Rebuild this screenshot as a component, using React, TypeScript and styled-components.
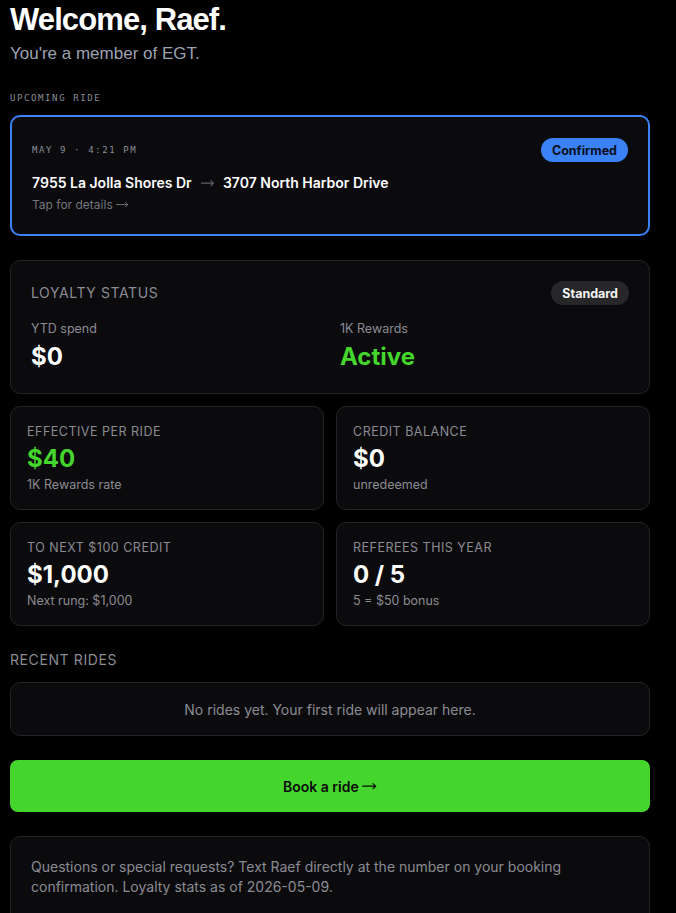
import React from "react";
import styled, { createGlobalStyle } from "styled-components";

const Global = createGlobalStyle`
  html, body { margin: 0; padding: 0; background: #000; }
  body { font-family: Inter, "Noto Sans", sans-serif; color: #fff; }
  * { box-sizing: border-box; }
`;

const Page = styled.div`
  padding: 0 26px 0 10px;
  display: flex;
  flex-direction: column;
`;

const Title = styled.h1`
  margin: 0;
  padding-top: 1px;
  font-family: "Liberation Sans", Arial, sans-serif;
  font-weight: 700;
  font-size: 31px;
  letter-spacing: -0.9px;
  line-height: 38px;
  color: #fff;
`;

const Subtitle = styled.p`
  margin: 5px 0 0;
  font-family: "Liberation Sans", Arial, sans-serif;
  font-size: 17px;
  line-height: 20px;
  color: #9ca3b3;
`;

const MonoLabel = styled.div`
  font-family: "DejaVu Sans Mono", "Liberation Mono", monospace;
  font-size: 9px;
  letter-spacing: 1.6px;
  color: #8a8f98;
  text-transform: uppercase;
`;

const SectionMono = styled(MonoLabel)`
  margin-top: 27px;
  line-height: 14px;
`;

const RideCard = styled.div`
  margin-top: 10px;
  border: 2px solid #3b82f6;
  border-radius: 10px;
  background: #0b0b0d;
  padding: 21px 20px 20px 20px;
  display: flex;
  flex-direction: column;
`;

const RideTop = styled.div`
  display: flex;
  justify-content: space-between;
  align-items: center;
`;

const Pill = styled.span<{ $tone: "blue" | "gray" }>`
  display: inline-flex;
  align-items: center;
  height: 24px;
  padding: 0 11px;
  border-radius: 12px;
  font-size: 12.5px;
  font-weight: 700;
  background: ${(p) => (p.$tone === "blue" ? "#3b82f6" : "#27272a")};
  color: ${(p) => (p.$tone === "blue" ? "#0a0f1e" : "#f4f4f5")};
`;

const Route = styled.div`
  margin-top: 10px;
  font-size: 14px;
  font-weight: 600;
  line-height: 22px;
  color: #fff;
  display: flex;
  align-items: center;
  gap: 9px;
`;

const ArrowSvg = styled.svg<{ $muted?: boolean }>`
  width: ${(p) => (p.$muted ? "0.95em" : "1.05em")};
  height: 0.6em;
  vertical-align: 0.05em;
  color: ${(p) => (p.$muted ? "#62626a" : "currentColor")};
  flex: none;
`;

function Arrow({ muted }: { muted?: boolean }) {
  return (
    <ArrowSvg $muted={muted} viewBox="0 0 15 8" fill="none" preserveAspectRatio="none">
      <path
        d="M0.5 4H14M11.2 1.6L14 4L11.2 6.4"
        stroke="currentColor"
        strokeWidth="1.1"
        strokeLinecap="round"
        strokeLinejoin="round"
      />
    </ArrowSvg>
  );
}

const Hint = styled.div`
  margin-top: 2px;
  font-size: 12px;
  line-height: 18px;
  color: #75757d;
`;

const Card = styled.div`
  border: 1px solid #232326;
  border-radius: 10px;
  background: #0b0b0d;
`;

const LoyaltyCard = styled(Card)`
  margin-top: 24px;
  padding: 20px 20px 21px;
`;

const LoyaltyHead = styled.div`
  display: flex;
  justify-content: space-between;
  align-items: center;
`;

const SectionLabel = styled.div`
  font-size: 14px;
  letter-spacing: 0.6px;
  text-transform: uppercase;
  color: #8b8b93;
  line-height: 20px;
`;

const TwoCol = styled.div`
  margin-top: 15px;
  display: grid;
  grid-template-columns: 1fr 1fr;
  column-gap: 20px;
`;

const SmallLabel = styled.div`
  font-size: 12.5px;
  line-height: 18px;
  color: #8b8b93;
`;

const BigValue = styled.div<{ $green?: boolean }>`
  margin-top: 4px;
  font-size: 24px;
  font-weight: 700;
  line-height: 30px;
  color: ${(p) => (p.$green ? "#44d62c" : "#fff")};
`;

const Grid = styled.div`
  margin-top: 12px;
  display: grid;
  grid-template-columns: 1fr 1fr;
  gap: 12px;
`;

const StatCard = styled(Card)`
  padding: 17px 16px 16px;
  height: 104px;
`;

const StatLabel = styled.div`
  font-size: 12.5px;
  letter-spacing: 0.5px;
  text-transform: uppercase;
  color: #8b8b93;
  line-height: 16px;
`;

const StatValue = styled(BigValue)`
  margin-top: 4px;
`;

const StatSub = styled.div`
  margin-top: 2px;
  font-size: 12.5px;
  line-height: 18px;
  color: #8b8b93;
`;

const RecentLabel = styled(SectionLabel)`
  margin-top: 24px;
`;

const EmptyCard = styled(Card)`
  margin-top: 12px;
  height: 54px;
  display: flex;
  align-items: center;
  justify-content: center;
  font-size: 14px;
  color: #8b8b93;
`;

const BookButton = styled.button`
  margin-top: 24px;
  height: 52px;
  width: 100%;
  border: none;
  border-radius: 8px;
  background: #44d62c;
  color: #0a0a0a;
  font-family: Inter, sans-serif;
  font-size: 14px;
  font-weight: 600;
  cursor: pointer;
`;

const NoteCard = styled(Card)`
  margin-top: 24px;
  padding: 20px 20px 30px;
  font-size: 14px;
  line-height: 20px;
  color: #8b8b93;
`;

const stats = [
  { label: "Effective per ride", value: "$40", sub: "1K Rewards rate", green: true },
  { label: "Credit balance", value: "$0", sub: "unredeemed" },
  { label: "To next $100 credit", value: "$1,000", sub: "Next rung: $1,000" },
  { label: "Referees this year", value: "0 / 5", sub: "5 = $50 bonus" },
];

export default function App() {
  return (
    <>
      <Global />
      <Page>
        <Title>Welcome, Raef.</Title>
        <Subtitle>You're a member of EGT.</Subtitle>

        <SectionMono>Upcoming ride</SectionMono>
        <RideCard>
          <RideTop>
            <MonoLabel>May 9 · 4:21 PM</MonoLabel>
            <Pill $tone="blue">Confirmed</Pill>
          </RideTop>
          <Route>
            <span>7955 La Jolla Shores Dr</span>
            <Arrow muted />
            <span>3707 North Harbor Drive</span>
          </Route>
          <Hint>
            Tap for details <Arrow />
          </Hint>
        </RideCard>

        <LoyaltyCard>
          <LoyaltyHead>
            <SectionLabel>Loyalty status</SectionLabel>
            <Pill $tone="gray">Standard</Pill>
          </LoyaltyHead>
          <TwoCol>
            <div>
              <SmallLabel>YTD spend</SmallLabel>
              <BigValue>$0</BigValue>
            </div>
            <div>
              <SmallLabel>1K Rewards</SmallLabel>
              <BigValue $green>Active</BigValue>
            </div>
          </TwoCol>
        </LoyaltyCard>

        <Grid>
          {stats.map((s) => (
            <StatCard key={s.label}>
              <StatLabel>{s.label}</StatLabel>
              <StatValue $green={s.green}>{s.value}</StatValue>
              <StatSub>{s.sub}</StatSub>
            </StatCard>
          ))}
        </Grid>

        <RecentLabel>Recent rides</RecentLabel>
        <EmptyCard>No rides yet. Your first ride will appear here.</EmptyCard>

        <BookButton>
          Book a ride <Arrow />
        </BookButton>

        <NoteCard>
          Questions or special requests? Text Raef directly at the number on your booking
          confirmation. Loyalty stats as of 2026-05-09.
        </NoteCard>
      </Page>
    </>
  );
}
